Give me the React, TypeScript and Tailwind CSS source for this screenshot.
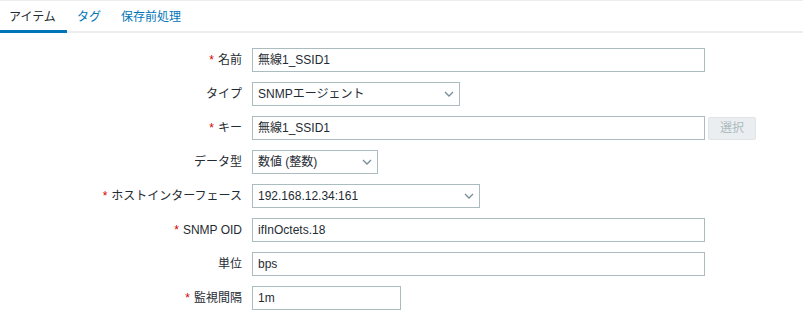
import React from 'react';

const font = { fontFamily: '"Liberation Sans", "Noto Sans CJK JP", sans-serif' };

type Field = {
  label: string;
  required?: boolean;
  value: string;
  kind: 'input' | 'select';
  width: string;
  button?: string;
};

const fields: Field[] = [
  { label: '名前', required: true, value: '無線1_SSID1', kind: 'input', width: 'w-[453px]' },
  { label: 'タイプ', value: 'SNMPエージェント', kind: 'select', width: 'w-[208px]' },
  { label: 'キー', required: true, value: '無線1_SSID1', kind: 'input', width: 'w-[453px]', button: '選択' },
  { label: 'データ型', value: '数値 (整数)', kind: 'select', width: 'w-[126px]' },
  { label: 'ホストインターフェース', required: true, value: '192.168.12.34:161', kind: 'select', width: 'w-[228px]' },
  { label: 'SNMP OID', required: true, value: 'ifInOctets.18', kind: 'input', width: 'w-[453px]' },
  { label: '単位', value: 'bps', kind: 'input', width: 'w-[453px]' },
  { label: '監視間隔', required: true, value: '1m', kind: 'input', width: 'w-[149px]' },
];

function Chevron() {
  return (
    <svg width="10" height="6" viewBox="0 0 10 6" className="shrink-0">
      <path d="M1 1 L5 5 L9 1" fill="none" stroke="#768d99" strokeWidth="1.3" />
    </svg>
  );
}

export default function App() {
  return (
    <div className="w-[803px] h-[311px] bg-white overflow-hidden text-[12px] text-[#1f2c33]" style={font}>
      {/* タブ */}
      <div className="border-t border-[#ebeef0] border-b-2 border-b-[#ebeef0] flex h-[33px]">
        <div className="px-[9px] pt-[7px] border-b-[3px] border-[#0275b8] -mb-[2px] w-[67px] text-[#1f2c33]">アイテム</div>
        <div className="px-[10px] pt-[7px] text-[#0275b8]">タグ</div>
        <div className="px-[10px] pt-[7px] text-[#0275b8]">保存前処理</div>
      </div>

      {/* フォーム */}
      <div className="flex flex-col gap-[10px] pt-[15px]">
        {fields.map((f) => (
          <div key={f.label} className="flex items-center gap-[10px] h-[24px]">
            <div className="w-[242px] text-right">
              {f.required && <span className="text-[#d40000] mr-[4px]">*</span>}
              {f.label}
            </div>
            <div
              className={`${f.width} h-[24px] border border-[#acbbc0] flex items-center justify-between px-[5px] bg-white`}
            >
              <span>{f.value}</span>
              {f.kind === 'select' && <Chevron />}
            </div>
            {f.button && (
              <div className="-ml-[7px] w-[48px] h-[23px] border border-[#dfe4e7] bg-[#ebeef0] rounded-[2px] flex items-center justify-center text-[#acbbc0]">
                {f.button}
              </div>
            )}
          </div>
        ))}
      </div>
    </div>
  );
}
